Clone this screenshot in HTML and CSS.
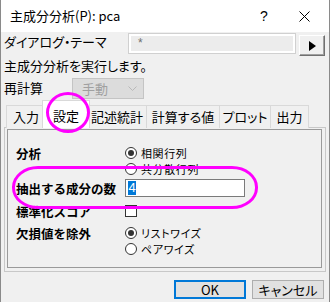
FILE: index.html
```html
<!DOCTYPE html>
<html lang="ja">
<head>
<meta charset="utf-8">
<link rel="stylesheet" href="styles.css">
</head>
<body>
<div class="window">
  <div class="titlebar">
    <span class="title">主成分分析(P): pca</span>
    <span class="help">?</span>
    <span class="close"><svg width="11" height="11" viewBox="0 0 11 11"><path d="M0.5 0.5 L10.5 10.5 M10.5 0.5 L0.5 10.5" stroke="#000" stroke-width="1" fill="none"/></svg></span>
  </div>
  <div class="content">
    <div class="row theme-row">
      <span class="theme-label">ダイアログ・テーマ</span>
      <div class="theme-field"><span class="theme-inner">*</span></div>
      <button class="arrow-btn"><svg width="7" height="10" viewBox="0 0 7 10"><path d="M0 0 L7 5 L0 10 Z" fill="#000"/></svg></button>
    </div>
    <div class="row desc">主成分分析を実行します。</div>
    <div class="row recalc-row">
      <span class="recalc-label">再計算</span>
      <div class="combo"><span class="combo-text">手動</span><svg class="chev" width="9" height="5" viewBox="0 0 9 5"><path d="M0.5 0.5 L4.5 4.5 L8.5 0.5" stroke="#b8b8b8" fill="none"/></svg></div>
    </div>
    <div class="tabs">
      <div class="tab t1">入力</div>
      <div class="tab t2 active">設定</div>
      <div class="tab t3">記述統計</div>
      <div class="tab t4">計算する値</div>
      <div class="tab t5">プロット</div>
      <div class="tab t6">出力</div>
    </div>
    <div class="panel">
      <div class="group">
        <div class="frow r-analysis">
          <span class="flabel">分析</span>
          <div class="opts">
            <div class="opt"><span class="radio checked"></span>相関行列</div>
            <div class="opt"><span class="radio"></span>共分散行列</div>
          </div>
        </div>
        <div class="frow r-count">
          <span class="flabel">抽出する成分の数</span>
          <div class="num-field"><span class="sel">4</span></div>
        </div>
        <div class="frow r-std">
          <span class="flabel">標準化スコア</span>
          <span class="check"></span>
        </div>
        <div class="frow r-missing">
          <span class="flabel">欠損値を除外</span>
          <div class="opts">
            <div class="opt"><span class="radio checked"></span>リストワイズ</div>
            <div class="opt"><span class="radio"></span>ペアワイズ</div>
          </div>
        </div>
      </div>
    </div>
    <div class="buttons">
      <button class="btn ok">OK</button>
      <button class="btn cancel">キャンセル</button>
    </div>
  </div>
  <div class="mark mark-tab"></div>
  <div class="mark mark-count"></div>
</div>
</body>
</html>
```

FILE: styles.css
```css
* { box-sizing: border-box; }
html, body { margin: 0; padding: 0; background: #f0f0f0; }
body {
  font-family: "Noto Sans CJK JP", "Noto Sans", sans-serif;
  font-size: 13px;
  line-height: 15px;
  color: #000;
  font-feature-settings: "palt";
}
.window {
  position: relative;
  width: 330px;
  height: 302px;
  border-left: 1px solid #8a8a8a;
  border-right: 1px solid #8a8a8a;
  background: #f0f0f0;
  overflow: hidden;
}
.titlebar {
  height: 32px;
  background: #fff;
  display: flex;
  align-items: center;
  padding-left: 9px;
}
.title { flex: 1; font-size: 13px; padding-bottom: 1px; font-feature-settings: normal; }
.help { width: 20px; text-align: center; font-family: "Liberation Sans", sans-serif; font-size: 14px; margin-right: 25px; }
.close { width: 12px; display: flex; margin-right: 18px; }
.content { padding: 0 3px; }
.row { display: flex; }
.theme-row { height: 24px; align-items: flex-start; }
.theme-label { width: 124px; padding-top: 2px; }
.theme-field {
  margin-top: 1px;
  width: 168px;
  height: 21px;
  border: 1px solid #d0d0d0;
  background: #fff;
  padding: 2px;
  display: flex;
}
.theme-inner {
  flex: 1;
  background: #ececec;
  color: #707070;
  padding-left: 7px;
  font-family: "Liberation Sans", sans-serif;
  font-size: 12px;
  line-height: 15px;
}
.arrow-btn {
  margin: 3px 0 0 3px;
  width: 26px;
  height: 21px;
  padding: 0;
  background: #f0f0f0;
  border: 1px solid;
  border-color: #fff #707070 #707070 #fff;
  box-shadow: inset -1px -1px 0 #a0a0a0;
  display: flex;
  align-items: center;
  justify-content: center;
}
.desc { height: 22px; padding-top: 2px; }
.recalc-row { height: 22px; }
.recalc-label { width: 68px; padding-top: 2px; }
.combo {
  width: 72px;
  height: 21px;
  background: #dcdcdc;
  border: 1px solid #c4c4c4;
  display: flex;
  align-items: center;
  padding: 0 6px 0 9px;
  color: #a0a0a0;
}
.combo-text { flex: 1; }
.tabs {
  height: 28px;
  display: flex;
  align-items: flex-end;
  padding-left: 2px;
  position: relative;
  z-index: 1;
}
.tab {
  height: 23px;
  border: 1px solid #d9d9d9;
  border-bottom: none;
  margin-right: -1px;
  display: flex;
  align-items: center;
  justify-content: center;
  padding-bottom: 1px;
  background: #f0f0f0;
}
.tab.active {
  height: 28px;
  background: #fff;
  margin: 0 -3px 0 -3px;
  padding-top: 3px;
  border-color: #d9d9d9;
  position: relative;
  z-index: 2;
}
.t1 { width: 40px; }
.t2 { width: 48px; }
.t3 { width: 60px; }
.t4 { width: 74px; }
.t5 { width: 52px; }
.t6 { width: 39px; }
.panel {
  height: 145px;
  border: 1px solid #c8c8c8;
  margin-top: -1px;
  padding: 1px 3px 3px 2px;
  background: #f0f0f0;
}
.group {
  height: 100%;
  border: 1px solid #9a9a9a;
  padding: 15px 0 0 8px;
}
.frow { display: flex; align-items: flex-start; }
.flabel { width: 109px; font-weight: bold; font-size: 12.5px; font-feature-settings: normal; }
.r-analysis .flabel { padding-top: 1px; }
.opts { display: flex; flex-direction: column; }
.opt { height: 16px; display: flex; align-items: center; line-height: 14px; font-size: 11px; letter-spacing: 0.6px; }
.radio {
  width: 12px;
  height: 12px;
  border: 1px solid #333;
  border-radius: 50%;
  background: #fff;
  margin-right: 4px;
  display: flex;
  align-items: center;
  justify-content: center;
}
.radio.checked::after {
  content: "";
  width: 6px;
  height: 6px;
  border-radius: 50%;
  background: #333;
}
.r-count { margin-top: 2px; align-items: center; height: 18px; }
.num-field {
  width: 120px;
  height: 18px;
  background: #fff;
  border: 1px solid #7a7a7a;
  padding: 1px 0 1px 2px;
  display: flex;
}
.sel {
  background: #0078d7;
  color: #fff;
  width: 8px;
  font-family: "Liberation Sans", sans-serif;
  font-size: 13px;
  line-height: 14px;
  text-align: center;
}
.r-std { margin-top: 5px; height: 18px; align-items: center; }
.check {
  width: 12px;
  height: 12px;
  border: 1px solid #333;
  background: #fff;
}
.r-missing { margin-top: 5px; }
.r-missing .flabel { padding-top: 1px; }
.buttons {
  display: flex;
  justify-content: flex-end;
  gap: 6px;
  padding: 8px 2px 0 0;
}
.btn {
  width: 72px;
  height: 19px;
  font-family: "Noto Sans CJK JP", sans-serif;
  font-size: 13px;
  line-height: 14px;
  padding: 0;
  background: #e1e1e1;
  border: 1px solid #adadad;
  color: #000;
  font-feature-settings: "palt";
}
.btn.ok { border: 2px solid #0078d7; }
.mark {
  position: absolute;
  border: 3px solid #ff00ff;
  z-index: 5;
  pointer-events: none;
}
.mark-tab {
  left: 45px;
  top: 92px;
  width: 44px;
  height: 41px;
  border-radius: 50%;
}
.mark-count {
  left: 11px;
  top: 166px;
  width: 246px;
  height: 43px;
  border-radius: 26px / 21px;
}
```
